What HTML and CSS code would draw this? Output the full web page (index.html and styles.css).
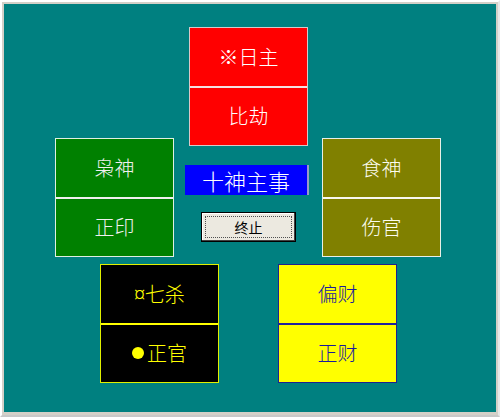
FILE: index.html
```html
<!DOCTYPE html>
<html>
<head>
<meta charset="utf-8">
<link rel="stylesheet" href="styles.css">
</head>
<body>
<div class="frame">
  <div class="canvas">
    <div class="row row-top">
      <div class="box red">
        <div class="cell">※日主</div>
        <div class="cell">比劫</div>
      </div>
    </div>
    <div class="row row-mid">
      <div class="box green">
        <div class="cell">枭神</div>
        <div class="cell">正印</div>
      </div>
      <div class="center">
        <div class="title">十神主事</div>
        <button class="btn"><span class="focus">终止</span></button>
      </div>
      <div class="box olive">
        <div class="cell">食神</div>
        <div class="cell">伤官</div>
      </div>
    </div>
    <div class="row row-bot">
      <div class="box black">
        <div class="cell">¤七杀</div>
        <div class="cell"><span class="dot"></span>正官</div>
      </div>
      <div class="box yellow">
        <div class="cell">偏财</div>
        <div class="cell">正财</div>
      </div>
    </div>
  </div>
</div>
</body>
</html>
```

FILE: styles.css
```css
html, body {
  margin: 0;
  padding: 0;
  width: 500px;
  height: 417px;
  overflow: hidden;
  background: #d4d0c8;
  font-family: "Noto Sans CJK SC", "Noto Sans", sans-serif;
}

.frame {
  box-sizing: border-box;
  width: 500px;
  height: 417px;
  border-top: 2px solid #ffffff;
  border-left: 2px solid #ffffff;
  border-right: 2px solid #e8e8e8;
  border-bottom: 2px solid #c8c8c8;
  background: #d4d0c8;
  padding: 2px 2px 3px 2px;
}

.canvas {
  width: 492px;
  height: 408px;
  background: #008080;
  overflow: hidden;
}

.row {
  display: flex;
  align-items: flex-start;
}

.row-top {
  padding-top: 23px;
  padding-left: 185px;
}

.row-mid {
  margin-top: -8px;
  padding-left: 51px;
}

.row-bot {
  margin-top: 7px;
  padding-left: 96px;
}

.box {
  box-sizing: border-box;
  width: 119px;
  height: 119px;
  border: 1px solid #c8c8c8;
  display: flex;
  flex-direction: column;
}

.cell {
  flex: 1;
  display: flex;
  align-items: center;
  justify-content: center;
  font-size: 20px;
  font-weight: 300;
  line-height: 1;
}

.cell + .cell {
  border-top: 2px solid #e8e8e8;
}

.red {
  background: #ff0000;
  color: #ffffff;
  border-color: #d8c8c8;
}
.red .cell + .cell { border-top-color: #f4e0e0; }

.green {
  background: #008000;
  color: #f0f0f0;
  border-color: #e0f0e0;
}
.green .cell + .cell { border-top-color: #f0f0f0; }

.olive {
  background: #808000;
  color: #fcfcf0;
  border-color: #e8f0e8;
  margin-left: 13px;
}
.olive .cell + .cell { border-top-color: #f8f8f0; }

.black {
  background: #000000;
  color: #ffff00;
  border-color: #e0f000;
}
.black .cell + .cell { border-top-color: #ffff00; }

.yellow {
  background: #ffff00;
  color: #1a1aa0;
  border-color: #202090;
  margin-left: 59px;
}
.yellow .cell + .cell { border-top-color: #2020a0; }

.dot {
  display: inline-block;
  width: 12px;
  height: 12px;
  border-radius: 50%;
  background: #ffff00;
  margin-right: 3px;
}

.center {
  width: 124px;
  margin-left: 11px;
  padding-top: 27px;
  display: flex;
  flex-direction: column;
}

.title {
  box-sizing: border-box;
  width: 124px;
  height: 30px;
  background: #0000ff;
  color: #ffffff;
  border-right: 2px solid #9a9ac8;
  font-size: 22px;
  font-weight: 300;
  line-height: 30px;
  text-align: center;
}

.btn {
  box-sizing: border-box;
  width: 95px;
  height: 30px;
  margin-top: 17px;
  margin-left: 16px;
  padding: 3px;
  background: #ece9e0;
  border: 1px solid #000000;
  box-shadow: inset -1px -1px 0 #404040, inset 1px 1px 0 #ffffff;
  font-family: "Noto Sans CJK SC", "Noto Sans", sans-serif;
  font-size: 14px;
  color: #000000;
  display: flex;
}

.focus {
  flex: 1;
  border: 1px dotted #505050;
  display: flex;
  align-items: center;
  justify-content: center;
  line-height: 1;
}
```
